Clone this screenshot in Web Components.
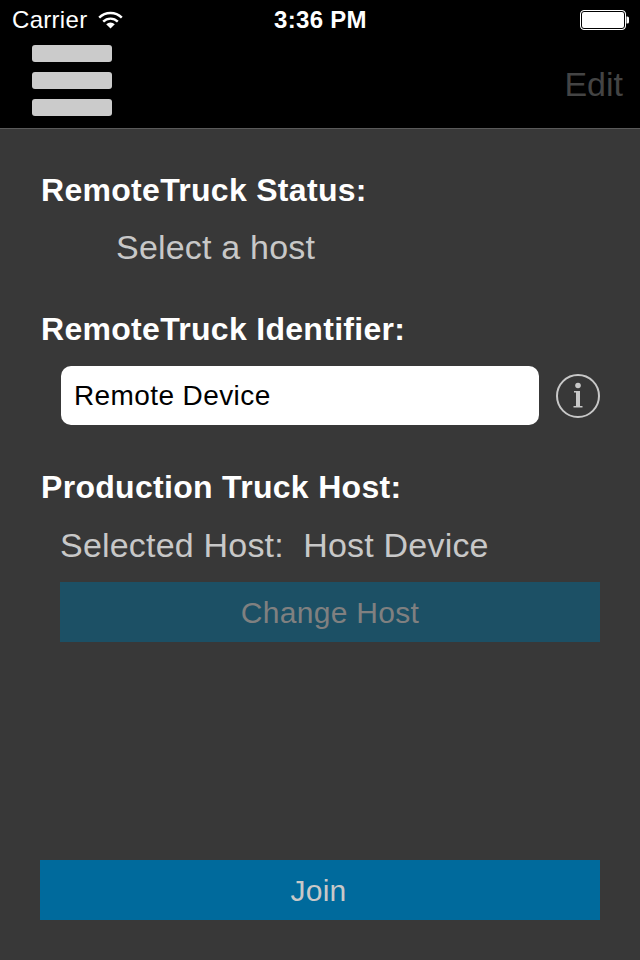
<!DOCTYPE html>
<html>
<head>
<meta charset="utf-8">
<style>
  html, body { margin: 0; padding: 0; background: #383838; }
  body { width: 640px; height: 960px; overflow: hidden; font-family: "Liberation Sans", Arial, sans-serif; }
</style>
</head>
<body>
<app-screen>
  <status-bar slot="top"></status-bar>
  <nav-bar slot="top"></nav-bar>
  <section-label style="margin-top:43px">RemoteTruck Status:</section-label>
  <value-text style="margin:20px 0 0 116px">Select a host</value-text>
  <section-label style="margin-top:45px">RemoteTruck Identifier:</section-label>
  <identifier-row value="Remote Device"></identifier-row>
  <section-label style="margin-top:44px">Production Truck Host:</section-label>
  <value-text style="margin:21px 0 0 60px">Selected Host:&nbsp; Host Device</value-text>
  <action-button disabled style="margin:18px 40px 0 60px">Change Host</action-button>
  <action-button style="margin:218px 40px 0 40px;padding-right:3px">Join</action-button>
</app-screen>

<script>
function shadow(el, html) {
  el.attachShadow({ mode: "open" }).innerHTML = html;
}

customElements.define("app-screen", class extends HTMLElement {
  connectedCallback() {
    shadow(this, `
      <style>
        :host { display: flex; flex-direction: column; width: 640px; height: 960px; background: #383838; }
        header { background: #000; border-bottom: 1px solid #5a5a5a; }
        main { display: flex; flex-direction: column; }
      </style>
      <header><slot name="top"></slot></header>
      <main><slot></slot></main>`);
  }
});

customElements.define("status-bar", class extends HTMLElement {
  connectedCallback() {
    shadow(this, `
      <style>
        :host { display: grid; grid-template-columns: 1fr auto 1fr; align-items: center; height: 40px; padding: 0 11px 0 12px; color: #fff; font-size: 24px; box-sizing: border-box; }
        .left { display: flex; align-items: center; gap: 11px; letter-spacing: .3px; }
        .time { font-weight: bold; letter-spacing: .3px; }
        .right { display: flex; justify-content: flex-end; }
        svg { display: block; }
      </style>
      <div class="left">
        <span>Carrier</span>
        <svg width="25" height="18" viewBox="0 0 25 18">
          <path d="M1.2 6.6a16 16 0 0 1 22.6 0" fill="none" stroke="#fff" stroke-width="2.4"/>
          <path d="M5.2 10.6a10.4 10.4 0 0 1 14.6 0" fill="none" stroke="#fff" stroke-width="2.4"/>
          <path d="M12.5 17.5L8.2 13.2a6 6 0 0 1 8.6 0z" fill="#fff"/>
        </svg>
      </div>
      <span class="time">3:36 PM</span>
      <div class="right">
        <svg width="49" height="20" viewBox="0 0 49 20">
          <rect x="0.5" y="0.5" width="45" height="19" rx="3.5" fill="#fff" stroke="#fff"/>
          <rect x="1.5" y="1.500" width="43" height="17" rx="2.5" fill="#fff" stroke="#000"/>
          <path d="M46.500 6.500h1a1.500 1.500 0 0 1 1.500 1.500v4a1.500 1.500 0 0 1-1.500 1.500h-1z" fill="#fff"/>
        </svg>
      </div>`);
  }
});

customElements.define("nav-bar", class extends HTMLElement {
  connectedCallback() {
    shadow(this, `
      <style>
        :host { display: flex; justify-content: space-between; align-items: center; height: 88px; padding: 0 17px 0 32px; box-sizing: border-box; }
        .menu { display: flex; flex-direction: column; gap: 10px; margin-top: -8px; }
        .menu i { display: block; width: 80px; height: 17px; border-radius: 3px; background: #cbcbcb; }
        .edit { color: #444; font-size: 34px; }
      </style>
      <div class="menu"><i></i><i></i><i></i></div>
      <span class="edit">Edit</span>`);
  }
});

customElements.define("section-label", class extends HTMLElement {
  connectedCallback() {
    shadow(this, `
      <style>
        :host { display: block; margin-left: 41px; color: #fff; font-size: 32px; font-weight: bold; letter-spacing: .3px; line-height: 36px; }
      </style>
      <slot></slot>`);
  }
});

customElements.define("value-text", class extends HTMLElement {
  connectedCallback() {
    shadow(this, `
      <style>
        :host { display: block; color: #c8c8c8; font-size: 34px; letter-spacing: .2px; line-height: 38px; }
      </style>
      <slot></slot>`);
  }
});

customElements.define("identifier-row", class extends HTMLElement {
  connectedCallback() {
    shadow(this, `
      <style>
        :host { display: flex; align-items: center; gap: 17px; margin: 19px 40px 0 61px; }
        .field { flex: 1; height: 59px; box-sizing: border-box; padding: 0 13px; display: flex; align-items: center; background: #fff; border-radius: 10px; color: #000; font-size: 28px; letter-spacing: .4px; }
        svg { display: block; }
      </style>
      <div class="field">${this.getAttribute("value")}</div>
      <svg width="44" height="44" viewBox="0 0 44 44">
        <circle cx="22" cy="22" r="21" fill="none" stroke="#c8c8c8" stroke-width="2"/>
        <circle cx="22" cy="11.500" r="2.800" fill="#c8c8c8"/>
        <path d="M18 17h6v15h2.500v1.500H17.500V32H20V18.500h-2z" fill="#c8c8c8"/>
      </svg>`);
  }
});

customElements.define("action-button", class extends HTMLElement {
  connectedCallback() {
    shadow(this, `
      <style>
        :host { display: flex; justify-content: center; align-items: center; height: 60px; padding-top: 2px; background: #006a9c; color: #c8c8c8; font-size: 30px; letter-spacing: .3px; box-sizing: border-box; }
        :host([disabled]) { background: #1c5065; color: #808080; }
      </style>
      <slot></slot>`);
  }
});
</script>
</body>
</html>
